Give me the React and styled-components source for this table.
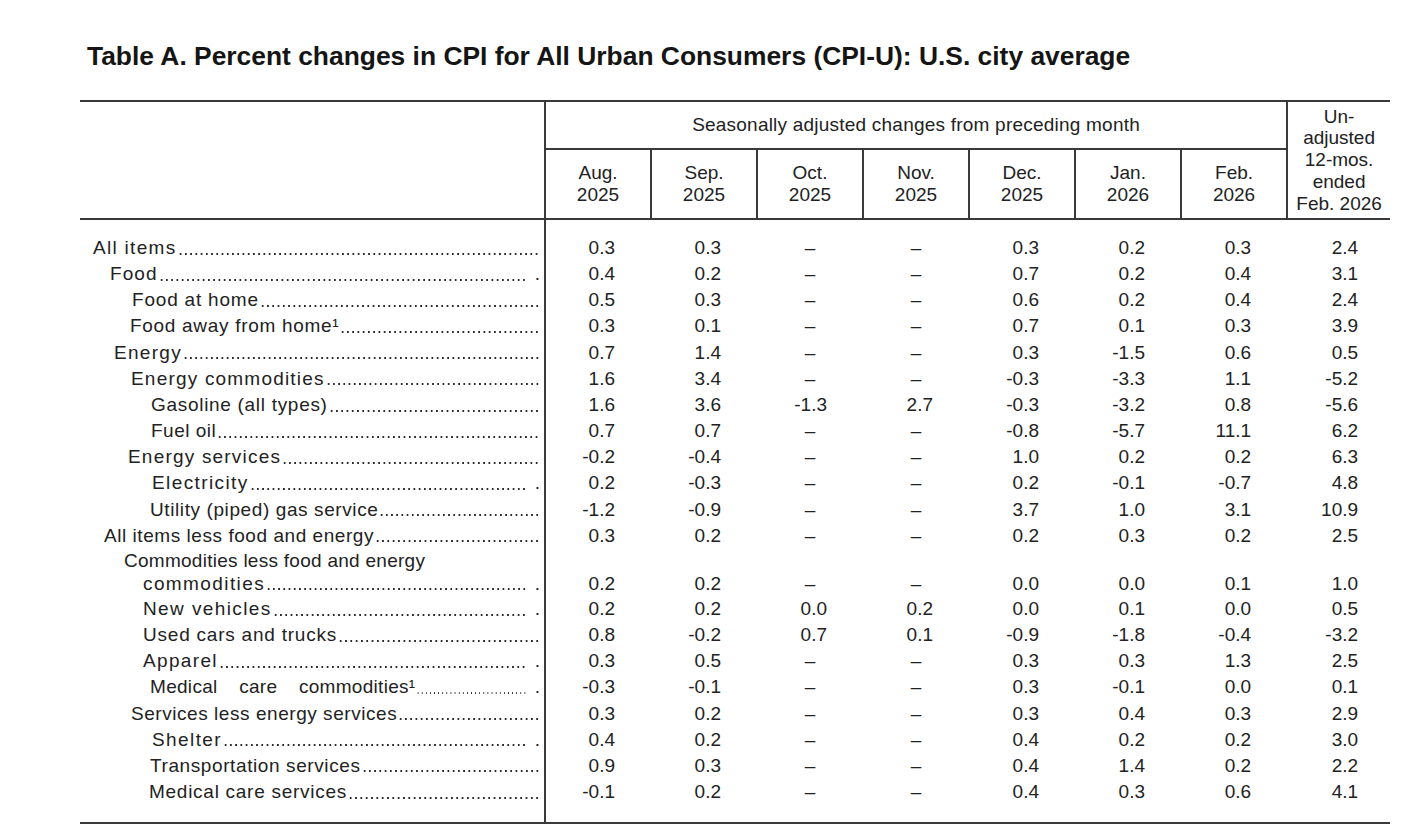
import React from "react";
import styled, { createGlobalStyle } from "styled-components";

const GlobalStyle = createGlobalStyle`
  body {
    margin: 0;
    background: #fff;
    font-family: "Liberation Sans", Arial, sans-serif;
    color: #222;
  }
`;

const Page = styled.div`
  padding: 41px 0 0 80px;
`;

const Title = styled.h1`
  margin: 0 0 29px 7px;
  font-size: 26.4px;
  line-height: 30px;
  font-weight: bold;
  color: #151515;
`;

const Table = styled.table`
  width: 1310px;
  table-layout: fixed;
  border-collapse: collapse;
  border-top: 2px solid #3a3a3a;
  border-bottom: 2px solid #3a3a3a;
  font-size: 19px;
  color: #222;
`;

const HeadCell = styled.th`
  font-weight: normal;
  padding: 0;
  height: ${(p) => p.h || 46}px;
  line-height: ${(p) => p.lh || 22}px;
  letter-spacing: ${(p) => p.ls || 0}px;
  text-align: center;
  vertical-align: middle;
  border-bottom: 2px solid #3a3a3a;
  border-left: ${(p) => (p.noLeft ? "none" : "2px solid #3a3a3a")};
`;

const Spacer = styled.tr`
  height: ${(p) => p.h}px;
  & > td {
    padding: 0;
  }
  & > td:first-child {
    border-right: 2px solid #3a3a3a;
  }
`;

const Row = styled.tr`
  height: ${(p) => (p.tall ? 47 : 26.15)}px;
`;

const LabelCell = styled.td`
  padding: 0 4px 0 0;
  border-right: 2px solid #3a3a3a;
  vertical-align: top;
`;

const LabelLine = styled.div`
  display: flex;
  align-items: baseline;
  padding-left: ${(p) => p.indent}px;
  line-height: ${(p) => (p.tall ? 23 : 26.15)}px;
  white-space: nowrap;
`;

const Name = styled.span`
  letter-spacing: ${(p) => p.ls}px;
  word-spacing: ${(p) => p.ws || 0}px;
`;

// dot leader drawn as a repeating dot pattern, flush with the column rule
const Leader = styled.span`
  flex: 1;
  align-self: stretch;
  margin: 0 ${(p) => (p.split ? 8 : 0)}px 0 1px;
  background-image: radial-gradient(
    circle at center,
    #2a2a2a 0,
    #2a2a2a ${(p) => (p.small ? 0.6 : 0.85)}px,
    transparent ${(p) => (p.small ? 0.95 : 1.25)}px
  );
  background-size: ${(p) => (p.small ? 4.1 : 5.28)}px 4px;
  background-repeat: round no-repeat;
  background-position: left bottom ${(p) => (p.tall ? 4 : 5.5)}px;
`;

const LastDot = styled.span`
  margin-left: 0;
`;

const ValueCell = styled.td`
  padding: ${(p) => (p.tall ? 23 : 0)}px ${(p) => (p.dash ? 0 : p.last ? 32 : 36)}px 0 0;
  text-align: ${(p) => (p.dash ? "center" : "right")};
  vertical-align: top;
  line-height: ${(p) => (p.tall ? 23 : 26.15)}px;
  white-space: nowrap;
`;

const months = [
  ["Aug.", "2025"],
  ["Sep.", "2025"],
  ["Oct.", "2025"],
  ["Nov.", "2025"],
  ["Dec.", "2025"],
  ["Jan.", "2026"],
  ["Feb.", "2026"],
];

const D = "–";

const rows = [
  { label: "All items", x: 13, ls: 1.3, v: ["0.3", "0.3", D, D, "0.3", "0.2", "0.3", "2.4"] },
  { label: "Food", x: 30, ls: 1.1, split: true, v: ["0.4", "0.2", D, D, "0.7", "0.2", "0.4", "3.1"] },
  { label: "Food at home", x: 52, ls: 0.8, v: ["0.5", "0.3", D, D, "0.6", "0.2", "0.4", "2.4"] },
  { label: "Food away from home¹", x: 50, ls: 0.7, v: ["0.3", "0.1", D, D, "0.7", "0.1", "0.3", "3.9"] },
  { label: "Energy", x: 34, ls: 1.3, v: ["0.7", "1.4", D, D, "0.3", "-1.5", "0.6", "0.5"] },
  { label: "Energy commodities", x: 51, ls: 1.2, v: ["1.6", "3.4", D, D, "-0.3", "-3.3", "1.1", "-5.2"] },
  { label: "Gasoline (all types)", x: 71, ls: 0.7, v: ["1.6", "3.6", "-1.3", "2.7", "-0.3", "-3.2", "0.8", "-5.6"] },
  { label: "Fuel oil", x: 71, ls: 0.5, v: ["0.7", "0.7", D, D, "-0.8", "-5.7", "11.1", "6.2"] },
  { label: "Energy services", x: 48, ls: 1.2, v: ["-0.2", "-0.4", D, D, "1.0", "0.2", "0.2", "6.3"] },
  { label: "Electricity", x: 72, ls: 1.4, split: true, v: ["0.2", "-0.3", D, D, "0.2", "-0.1", "-0.7", "4.8"] },
  { label: "Utility (piped) gas service", x: 70, ls: 0.6, v: ["-1.2", "-0.9", D, D, "3.7", "1.0", "3.1", "10.9"] },
  { label: "All items less food and energy", x: 24, ls: 0.55, v: ["0.3", "0.2", D, D, "0.2", "0.3", "0.2", "2.5"] },
  {
    label: "commodities",
    first: "Commodities less food and energy",
    firstX: 44,
    x: 63,
    ls: 1.4,
    split: true,
    v: ["0.2", "0.2", D, D, "0.0", "0.0", "0.1", "1.0"],
  },
  { label: "New vehicles", x: 63, ls: 1.4, split: true, v: ["0.2", "0.2", "0.0", "0.2", "0.0", "0.1", "0.0", "0.5"] },
  { label: "Used cars and trucks", x: 63, ls: 0.78, v: ["0.8", "-0.2", "0.7", "0.1", "-0.9", "-1.8", "-0.4", "-3.2"] },
  { label: "Apparel", x: 63, ls: 1.35, split: true, v: ["0.3", "0.5", D, D, "0.3", "0.3", "1.3", "2.5"] },
  {
    label: "Medical care commodities¹",
    x: 70,
    ls: 0.3,
    ws: 16,
    split: true,
    small: true,
    v: ["-0.3", "-0.1", D, D, "0.3", "-0.1", "0.0", "0.1"],
  },
  { label: "Services less energy services", x: 51, ls: 0.55, v: ["0.3", "0.2", D, D, "0.3", "0.4", "0.3", "2.9"] },
  { label: "Shelter", x: 72, ls: 1.4, split: true, v: ["0.4", "0.2", D, D, "0.4", "0.2", "0.2", "3.0"] },
  { label: "Transportation services", x: 70, ls: 0.6, v: ["0.9", "0.3", D, D, "0.4", "1.4", "0.2", "2.2"] },
  { label: "Medical care services", x: 69, ls: 0.73, v: ["-0.1", "0.2", D, D, "0.4", "0.3", "0.6", "4.1"] },
];

const App = () => {
  return (
    <>
      <GlobalStyle />
      <Page>
        <Title>Table A. Percent changes in CPI for All Urban Consumers (CPI-U): U.S. city average</Title>
        <Table>
          <colgroup>
            <col style={{ width: 465 }} />
            {months.map((m) => (
              <col key={m.join()} style={{ width: 106 }} />
            ))}
            <col style={{ width: 103 }} />
          </colgroup>
          <thead>
            <tr>
              <HeadCell rowSpan={2} noLeft h={114} />
              <HeadCell colSpan={7} h={46} ls={0.22}>
                Seasonally adjusted changes from preceding month
              </HeadCell>
              <HeadCell rowSpan={2} h={114} lh={21.7}>
                Un-
                <br />
                adjusted
                <br />
                12-mos.
                <br />
                ended
                <br />
                Feb. 2026
              </HeadCell>
            </tr>
            <tr>
              {months.map(([m, y]) => (
                <HeadCell key={m} h={68}>
                  {m}
                  <br />
                  {y}
                </HeadCell>
              ))}
            </tr>
          </thead>
          <tbody>
            <Spacer h={16}>
              <td />
              <td colSpan={8} />
            </Spacer>
            {rows.map((r) => {
              const tall = Boolean(r.first);
              return (
                <Row key={r.label} tall={tall}>
                  <LabelCell>
                    {r.first && (
                      <LabelLine indent={r.firstX} tall>
                        <Name ls={0.27}>{r.first}</Name>
                      </LabelLine>
                    )}
                    <LabelLine indent={r.x} tall={tall}>
                      <Name ls={r.ls} ws={r.ws}>
                        {r.label}
                      </Name>
                      <Leader small={r.small} split={r.split} tall={tall} />
                      {r.split && <LastDot>.</LastDot>}
                    </LabelLine>
                  </LabelCell>
                  {r.v.map((val, i) => (
                    <ValueCell key={i} dash={val === D} last={i === 7} tall={tall}>
                      {val}
                    </ValueCell>
                  ))}
                </Row>
              );
            })}
            <Spacer h={18}>
              <td />
              <td colSpan={8} />
            </Spacer>
          </tbody>
        </Table>
      </Page>
    </>
  );
};

export default App;
